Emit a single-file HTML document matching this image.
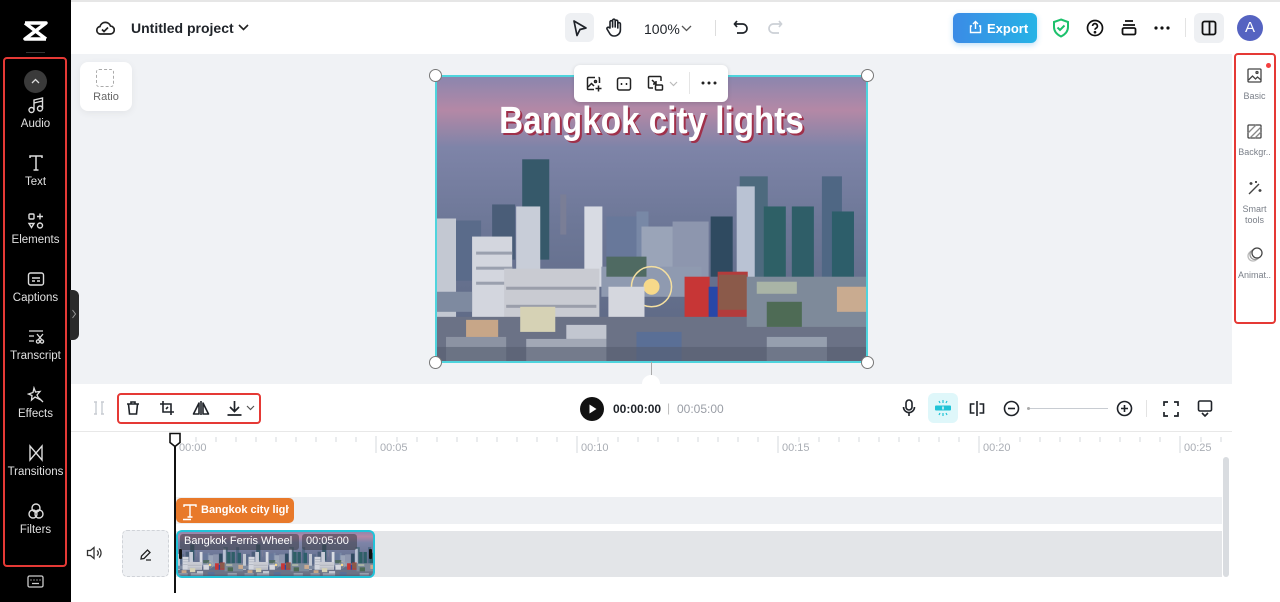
<!DOCTYPE html>
<html><head><meta charset="utf-8">
<style>
*{box-sizing:border-box;margin:0;padding:0}
body{width:1280px;height:602px;overflow:hidden;font-family:"Liberation Sans",sans-serif;background:#fff;position:relative}
.abs{position:absolute}
.side{left:0;top:0;width:71px;height:602px;background:#000}
.si{position:absolute;left:0;width:71px;text-align:center;color:#d8d8d8;font-size:11px}
.si svg{display:block;margin:0 auto 4px}
.lbl{font-size:11.5px;color:#e0e0e0}
.rp{position:absolute;left:1234px;width:41px;text-align:center;color:#7a7f88;font-size:9px;line-height:11px}
.rp svg{display:block;margin:0 auto 8px}
.ic{position:absolute}
</style></head><body>
<div class="abs" style="left:0;top:0;width:1280px;height:2px;background:#e6e6e6"></div>
<div class="abs" style="left:71px;top:54px;width:1161px;height:330px;background:#f0f2f5"></div>
<div class="abs side"></div>
<svg class="ic" style="left:23px;top:21px" width="25" height="20" viewBox="0 0 25 20"><path d="M2 2h21L2 18h21M2 2l21 16" fill="none" stroke="#fff" stroke-width="3.5" stroke-linejoin="round"/></svg>
<div class="abs" style="left:26px;top:52px;width:19px;height:1px;background:#333"></div>
<div class="abs" style="left:3px;top:57px;width:64px;height:510px;border:2.5px solid #e53935;border-radius:4px"></div>
<div class="abs" style="left:24px;top:70px;width:23px;height:23px;border-radius:50%;background:#3a3a3a"></div>
<svg class="ic" style="left:30px;top:77px" width="11" height="8"><path d="M2 6l3.5-3.5L9 6" stroke="#ddd" fill="none" stroke-width="1.3"/></svg>
<div class="si" style="top:96px"><svg width="18" height="18" viewBox="0 0 18 18" fill="none" stroke="#ddd" stroke-width="1.4"><circle cx="4.5" cy="14" r="2.5"/><circle cx="13" cy="12.5" r="2.5"/><path d="M7 14V4l8.5-2v10.5M7 7l8.5-2"/></svg><span class="lbl">Audio</span></div>
<div class="si" style="top:154px"><svg width="18" height="18" viewBox="0 0 18 18" fill="none" stroke="#ddd" stroke-width="1.5"><path d="M3 4V2h12v2M9 2v14M6.5 16h5"/></svg><span class="lbl">Text</span></div>
<div class="si" style="top:212px"><svg width="18" height="18" viewBox="0 0 18 18" fill="none" stroke="#ddd" stroke-width="1.4"><rect x="2" y="2" width="5" height="5" rx="1"/><path d="M13 1.5v6M10 4.5h6M2 11.5l2.5 4 2.5-4z"/><circle cx="13" cy="13.5" r="2.5"/></svg><span class="lbl">Elements</span></div>
<div class="si" style="top:270px"><svg width="18" height="18" viewBox="0 0 18 18" fill="none" stroke="#ddd" stroke-width="1.4"><rect x="1.5" y="3" width="15" height="12" rx="2"/><path d="M5 8h8M5 11h3M10 11h3"/></svg><span class="lbl">Captions</span></div>
<div class="si" style="top:328px"><svg width="18" height="18" viewBox="0 0 18 18" fill="none" stroke="#ddd" stroke-width="1.3"><path d="M2 3h14M2 8h5M2 13h5"/><circle cx="11" cy="13.5" r="1.6"/><circle cx="15" cy="13.5" r="1.6"/><path d="M10 6l5 6M16 6l-5 6"/></svg><span class="lbl">Transcript</span></div>
<div class="si" style="top:386px"><svg width="18" height="18" viewBox="0 0 18 18" fill="none" stroke="#ddd" stroke-width="1.3"><path d="M7 2l1.5 4 4.5-.5-3 3.5 2 4-4-2-3.5 3 .5-4.5L1.5 8l4.5-1.5z M12 12l4 4"/></svg><span class="lbl">Effects</span></div>
<div class="si" style="top:444px"><svg width="18" height="18" viewBox="0 0 18 18" fill="none" stroke="#ddd" stroke-width="1.4"><path d="M3 2v14l12-14v14z"/></svg><span class="lbl">Transitions</span></div>
<div class="si" style="top:502px"><svg width="18" height="18" viewBox="0 0 18 18" fill="none" stroke="#ddd" stroke-width="1.4"><circle cx="9" cy="6" r="4"/><circle cx="6" cy="12" r="4"/><circle cx="12" cy="12" r="4"/></svg><span class="lbl">Filters</span></div>
<svg class="ic" style="left:27px;top:575px" width="17" height="14" viewBox="0 0 17 14" fill="none" stroke="#ccc" stroke-width="1.3"><rect x="1" y="1" width="15" height="11" rx="1.5"/><path d="M4 4.5v1M7 4.5v1M10 4.5v1M13 4.5v1M5 8.5h7"/></svg>
<div class="abs" style="left:70px;top:290px;width:9px;height:50px;background:#2a2a2a;border-radius:0 6px 6px 0"></div>
<svg class="ic" style="left:71px;top:309px" width="6" height="10"><path d="M1.5 1l3 4-3 4" stroke="#999" fill="none"/></svg>

<svg class="ic" style="left:95px;top:19px" width="20" height="17" viewBox="0 0 20 17" fill="none" stroke="#222" stroke-width="1.7"><path d="M5 15h10a4 4 0 0 0 .5-8A5.5 5.5 0 0 0 5 7.5 3.8 3.8 0 0 0 5 15z"/><path d="M7 10.5l2 2 4-4"/></svg>
<div class="abs" style="left:131px;top:20px;font-size:14px;font-weight:bold;color:#1f2329">Untitled project</div>
<svg class="ic" style="left:238px;top:24px" width="11" height="7"><path d="M1 1l4.5 4.5L10 1" stroke="#222" fill="none" stroke-width="1.6"/></svg>
<div class="abs" style="left:565px;top:13px;width:29px;height:29px;border-radius:6px;background:#eef0f3"></div>
<svg class="ic" style="left:572px;top:19px" width="16" height="18" viewBox="0 0 16 18"><path d="M2 2l12 7-6 1.5-3 6z" fill="none" stroke="#1f2329" stroke-width="1.7" stroke-linejoin="round"/></svg>
<svg class="ic" style="left:605px;top:18px" width="17" height="19" viewBox="0 0 17 19" fill="none" stroke="#1f2329" stroke-width="1.6" stroke-linejoin="round"><path d="M5 10V4a1.3 1.3 0 0 1 2.6 0v5V2.5a1.3 1.3 0 0 1 2.6 0V9V3.5a1.3 1.3 0 0 1 2.6 0V10V6a1.3 1.3 0 0 1 2.6 0v6a6 6 0 0 1-6 6H9a5 5 0 0 1-4-2l-3-5a1.3 1.3 0 0 1 2.2-1.3z"/></svg>
<div class="abs" style="left:644px;top:21px;font-size:14px;color:#1f2329">100%</div>
<svg class="ic" style="left:681px;top:25px" width="11" height="7"><path d="M1 1l4.5 4.5L10 1" stroke="#555" fill="none" stroke-width="1.3"/></svg>
<div class="abs" style="left:715px;top:20px;width:1px;height:16px;background:#ddd"></div>
<svg class="ic" style="left:733px;top:19px" width="16" height="16" viewBox="0 0 16 16" fill="none" stroke="#1f2329" stroke-width="1.7"><path d="M4 2L1.5 5 4 8M2 5h7.5a4.5 4.5 0 0 1 0 9H4"/></svg>
<svg class="ic" style="left:767px;top:19px" width="16" height="16" viewBox="0 0 16 16" fill="none" stroke="#ccd0d6" stroke-width="1.7"><path d="M12 2l2.5 3L12 8M14 5H6.5a4.5 4.5 0 0 0 0 9H12"/></svg>
<div class="abs" style="left:953px;top:13px;width:84px;height:30px;border-radius:6px;background:linear-gradient(90deg,#3b8be6,#25b3e6);box-shadow:0 2px 6px rgba(40,150,230,.3)"></div>
<svg class="ic" style="left:969px;top:20px" width="13" height="14" viewBox="0 0 13 14" fill="none" stroke="#fff" stroke-width="1.4"><path d="M6.5 9V1.5M4 4l2.5-2.5L9 4M3 6H1.5v6.5h10V6H10"/></svg>
<div class="abs" style="left:987px;top:21px;font-size:13px;font-weight:bold;color:#fff">Export</div>
<svg class="ic" style="left:1052px;top:18px" width="18" height="20" viewBox="0 0 18 20" fill="none" stroke="#1cc16c" stroke-width="2"><path d="M9 1.5l7 2.5v5c0 4.5-3 7.5-7 9.5-4-2-7-5-7-9.5V4z"/><path d="M5.5 9.5l2.5 2.5 4.5-4.5"/></svg>
<svg class="ic" style="left:1086px;top:19px" width="18" height="18" viewBox="0 0 18 18" fill="none" stroke="#111" stroke-width="1.7"><circle cx="9" cy="9" r="7.5"/><path d="M6.6 7a2.4 2.4 0 1 1 3.4 2.2c-.7.4-1 .8-1 1.6"/><circle cx="9" cy="13.2" r=".5" fill="#111"/></svg>
<svg class="ic" style="left:1121px;top:19px" width="16" height="17" viewBox="0 0 16 17" fill="none" stroke="#111" stroke-width="1.8"><path d="M4 2h8M2 6h12"/><rect x="1.5" y="9" width="13" height="6.5" rx="1.5"/></svg>
<svg class="ic" style="left:1154px;top:26px" width="16" height="4"><circle cx="2" cy="2" r="1.6" fill="#111"/><circle cx="8" cy="2" r="1.6" fill="#111"/><circle cx="14" cy="2" r="1.6" fill="#111"/></svg>
<div class="abs" style="left:1185px;top:18px;width:1px;height:19px;background:#e3e3e3"></div>
<div class="abs" style="left:1194px;top:13px;width:30px;height:30px;border-radius:6px;background:#eef0f3"></div>
<svg class="ic" style="left:1201px;top:20px" width="16" height="16" viewBox="0 0 16 16" fill="none" stroke="#111" stroke-width="1.8"><rect x="1.5" y="1.5" width="13" height="13" rx="2"/><path d="M8.5 1.5v13"/></svg>
<div class="abs" style="left:1237px;top:15px;width:26px;height:26px;border-radius:50%;background:#5563c1;color:#fff;font-size:15px;text-align:center;line-height:26px">A</div>

<div class="abs" style="left:80px;top:62px;width:52px;height:49px;background:#fff;border-radius:8px;box-shadow:0 2px 8px rgba(0,0,0,.06)"></div>
<div class="abs" style="left:96px;top:69px;width:18px;height:18px;border:1.5px dashed #aaa;border-radius:3px"></div>
<div class="abs" style="left:80px;top:91px;width:52px;text-align:center;font-size:11px;color:#666">Ratio</div>

<svg class="abs" style="left:436px;top:76px" width="431" height="286" viewBox="0 0 430 285" preserveAspectRatio="none">
<defs>
<linearGradient id="sky" x1="0" y1="0" x2="0" y2="1"><stop offset="0" stop-color="#8a86ae"/><stop offset=".12" stop-color="#b488a6"/><stop offset=".25" stop-color="#7e84a8"/><stop offset=".5" stop-color="#6e7898"/><stop offset="1" stop-color="#5a6680"/></linearGradient>
<g id="city">
<rect width="430" height="285" fill="url(#sky)"/>
<rect x="86" y="83" width="27" height="100" fill="#36596a"/>
<rect x="56" y="128" width="23" height="55" fill="#4a5d78"/>
<rect x="80" y="130" width="24" height="70" fill="#c8cdd8"/>
<rect x="148" y="130" width="18" height="80" fill="#d8dbe3"/>
<rect x="0" y="142" width="20" height="100" fill="#c3c8d2"/>
<rect x="20" y="144" width="25" height="60" fill="#5a6b8a"/>
<rect x="124" y="118" width="6" height="40" fill="#7a7e96"/>
<rect x="170" y="140" width="30" height="60" fill="#68789a"/>
<rect x="200" y="135" width="12" height="60" fill="#7888a6"/>
<rect x="205" y="150" width="32" height="60" fill="#9aa4b8"/>
<rect x="274" y="140" width="22" height="60" fill="#2f4a60"/>
<rect x="303" y="100" width="28" height="130" fill="#4d6a7e"/>
<rect x="327" y="130" width="22" height="120" fill="#2e6066"/>
<rect x="355" y="130" width="22" height="100" fill="#2f5e68"/>
<rect x="385" y="100" width="20" height="120" fill="#4f6784"/>
<rect x="395" y="135" width="22" height="110" fill="#2d5e6a"/>
<rect x="300" y="110" width="18" height="100" fill="#b9c2d3"/>
<rect x="236" y="145" width="36" height="65" fill="#8d96ae"/>
<rect x="36" y="160" width="40" height="110" fill="#d3d6de"/>
<rect x="40" y="175" width="36" height="3" fill="#9aa0ae"/><rect x="40" y="190" width="36" height="3" fill="#9aa0ae"/><rect x="40" y="205" width="36" height="3" fill="#9aa0ae"/>
<rect x="68" y="192" width="95" height="80" fill="#c9cbd2"/>
<rect x="70" y="210" width="90" height="3" fill="#9a9eaa"/><rect x="70" y="228" width="90" height="3" fill="#9a9eaa"/>
<rect x="0" y="215" width="36" height="20" fill="#7e8aa0"/>
<rect x="165" y="190" width="100" height="30" fill="#8f9ab0"/>
<rect x="170" y="180" width="40" height="20" fill="#4f6a62"/>
<circle cx="215" cy="210" r="20" fill="none" stroke="#f4dfa0" stroke-width="1.5"/>
<circle cx="215" cy="210" r="8" fill="#f7d98a"/>
<rect x="172" y="210" width="36" height="40" fill="#d5d7de"/>
<rect x="248" y="200" width="25" height="70" fill="#c73636"/>
<rect x="272" y="210" width="10" height="65" fill="#2747a8"/>
<rect x="281" y="195" width="30" height="80" fill="#b33c3c"/>
<rect x="282" y="198" width="28" height="35" fill="#8b5a4a"/>
<rect x="0" y="240" width="430" height="45" fill="#6b7286"/>
<rect x="310" y="200" width="120" height="50" fill="#7e8a9a"/>
<rect x="320" y="205" width="40" height="12" fill="#a9b4a6"/>
<rect x="330" y="225" width="35" height="25" fill="#4e6b55"/>
<rect x="400" y="210" width="30" height="25" fill="#c9ab90"/>
<rect x="30" y="243" width="32" height="18" fill="#c7a688"/>
<rect x="84" y="230" width="35" height="25" fill="#d6d2b5"/>
<rect x="10" y="260" width="60" height="25" fill="#8c93a3"/>
<rect x="90" y="262" width="80" height="23" fill="#a2a8b6"/>
<rect x="130" y="248" width="40" height="14" fill="#c2c6d0"/>
<rect x="200" y="255" width="45" height="30" fill="#5a6f96"/>
<rect x="330" y="260" width="60" height="25" fill="#969fae"/>
<rect x="0" y="270" width="430" height="15" fill="#555d70" opacity=".6"/>
</g></defs>
<use href="#city"/>
<text x="215" y="57" text-anchor="middle" font-family="Liberation Sans Narrow, Liberation Sans" font-weight="bold" font-size="38" fill="#a0304a" transform="translate(2,2)" textLength="304" lengthAdjust="spacingAndGlyphs">Bangkok city lights</text>
<text x="215" y="57" text-anchor="middle" font-family="Liberation Sans Narrow, Liberation Sans" font-weight="bold" font-size="38" fill="#fff" textLength="304" lengthAdjust="spacingAndGlyphs">Bangkok city lights</text>
</svg>
<div class="abs" style="left:435px;top:75px;width:433px;height:288px;border:2px solid #4fd4dd"></div>
<div class="abs" style="left:429px;top:69px;width:13px;height:13px;border-radius:50%;background:#fff;border:1px solid #777"></div>
<div class="abs" style="left:861px;top:69px;width:13px;height:13px;border-radius:50%;background:#fff;border:1px solid #777"></div>
<div class="abs" style="left:429px;top:356px;width:13px;height:13px;border-radius:50%;background:#fff;border:1px solid #777"></div>
<div class="abs" style="left:861px;top:356px;width:13px;height:13px;border-radius:50%;background:#fff;border:1px solid #777"></div>
<div class="abs" style="left:651px;top:362px;width:1px;height:14px;background:#aaa"></div>
<div class="abs" style="left:642px;top:375px;width:18px;height:12px;border-radius:9px 9px 0 0;background:#fff"></div>
<div class="abs" style="left:574px;top:65px;width:154px;height:37px;background:#fff;border-radius:6px;box-shadow:0 1px 4px rgba(0,0,0,.15)"></div>
<svg class="ic" style="left:586px;top:76px" width="16" height="16" viewBox="0 0 16 16" fill="none" stroke="#222" stroke-width="1.5"><path d="M9 1.5H2.5a1 1 0 0 0-1 1v10a1 1 0 0 0 1 1H8M13.5 7V2.5a1 1 0 0 0-1-1"/><path d="M2 11l3.5-3.5L8 10"/><circle cx="9.5" cy="5.5" r="1"/><path d="M12.5 9.5v6M9.5 12.5h6"/></svg>
<svg class="ic" style="left:616px;top:76px" width="16" height="16" viewBox="0 0 16 16" fill="none" stroke="#222" stroke-width="1.5"><rect x="1.5" y="2" width="13" height="12" rx="2"/><path d="M5.5 7v2M10.5 7v2"/></svg>
<svg class="ic" style="left:647px;top:75px" width="17" height="17" viewBox="0 0 17 17" fill="none" stroke="#222" stroke-width="1.5"><path d="M14 6V2.5a1 1 0 0 0-1-1H2.5a1 1 0 0 0-1 1V12a1 1 0 0 0 1 1H6"/><path d="M5 5l4 4M9 6v3H6"/><rect x="8.5" y="10" width="7" height="5" rx="1"/></svg>
<svg class="ic" style="left:669px;top:81px" width="9" height="6"><path d="M1 1l3.5 3.5L8 1" stroke="#bbb" fill="none" stroke-width="1.2"/></svg>
<div class="abs" style="left:689px;top:72px;width:1px;height:22px;background:#e5e5e5"></div>
<svg class="ic" style="left:701px;top:81px" width="16" height="4"><circle cx="2" cy="2" r="1.5" fill="#222"/><circle cx="8" cy="2" r="1.5" fill="#222"/><circle cx="14" cy="2" r="1.5" fill="#222"/></svg>

<div class="abs" style="left:1232px;top:54px;width:48px;height:548px;background:#fff"></div>
<div class="abs" style="left:1234px;top:53px;width:42px;height:271px;border:2.5px solid #e53935;border-radius:4px"></div>
<div class="abs" style="left:1266px;top:63px;width:5px;height:5px;border-radius:50%;background:#f43f3f"></div>
<div class="rp" style="top:68px"><svg width="15" height="15" viewBox="0 0 15 15" fill="none" stroke="#444" stroke-width="1.3"><rect x="1" y="1" width="13" height="13" rx="1"/><path d="M1.5 12l4-4 3 3 2-2 3.5 3"/><circle cx="10" cy="4.5" r="1"/></svg>Basic</div>
<div class="rp" style="top:124px"><svg width="15" height="15" viewBox="0 0 15 15" fill="none" stroke="#444" stroke-width="1.3"><rect x="1" y="1" width="13" height="13" rx="1"/><path d="M1 9l8-8M3 14L14 3M8 14l6-6" stroke="#888"/></svg>Backgr..</div>
<div class="rp" style="top:180px"><svg width="16" height="16" viewBox="0 0 16 16" fill="none" stroke="#444" stroke-width="1.4"><path d="M2 14l10-10M4 2v3M2.5 3.5h3M13 9v3M11.5 10.5h3M9 1v2M8 2h2"/></svg>Smart<br>tools</div>
<div class="rp" style="top:247px"><svg width="16" height="15" viewBox="0 0 16 15" fill="none" stroke-width="1.3"><circle cx="6" cy="9" r="5" stroke="#bbb"/><circle cx="8" cy="7.5" r="5" stroke="#999" fill="#fff"/><circle cx="10" cy="6" r="5" stroke="#444" fill="#fff"/></svg>Animat..</div>

<div class="abs" style="left:71px;top:431px;width:1161px;height:1px;background:#e8e8e8"></div>
<svg class="ic" style="left:92px;top:401px" width="14" height="14" viewBox="0 0 14 14" fill="none" stroke="#c8ccd2" stroke-width="1.4"><path d="M2 1h2v12H2M12 1h-2v12h2M4 1h1M4 13h1M9 1h1M9 13h1"/></svg>
<div class="abs" style="left:117px;top:393px;width:144px;height:31px;border:2.5px solid #e53935;border-radius:4px"></div>
<svg class="ic" style="left:125px;top:400px" width="16" height="16" viewBox="0 0 16 16" fill="none" stroke="#1f2329" stroke-width="1.6"><path d="M2 4h12M6 4V2h4v2M3.5 4l1 10h7l1-10"/></svg>
<svg class="ic" style="left:159px;top:400px" width="16" height="16" viewBox="0 0 16 16" fill="none" stroke="#1f2329" stroke-width="1.6"><path d="M4 1v11h11M1 4h11v11M7 9l2-2"/></svg>
<svg class="ic" style="left:192px;top:400px" width="18" height="16" viewBox="0 0 18 16" fill="none" stroke="#1f2329" stroke-width="1.6" stroke-linejoin="round"><path d="M9 1v14M7 3L1.5 14H7zM11 3l5.5 11H11z"/></svg>
<svg class="ic" style="left:226px;top:400px" width="17" height="16" viewBox="0 0 17 16" fill="none" stroke="#1f2329" stroke-width="1.7"><path d="M8.5 1v10M4 7l4.5 4.5L13 7M1.5 15h14"/></svg>
<svg class="ic" style="left:246px;top:405px" width="9" height="6"><path d="M1 1l3.5 3.5L8 1" stroke="#555" fill="none" stroke-width="1.2"/></svg>

<div class="abs" style="left:580px;top:397px;width:24px;height:24px;border-radius:50%;background:#111"></div>
<svg class="ic" style="left:589px;top:404px" width="8" height="10"><path d="M0.5 0.5L7.5 5 0.5 9.5z" fill="#fff"/></svg>
<div class="abs" style="left:613px;top:402px;font-size:12px;font-weight:bold;color:#1f2329">00:00:00</div>
<div class="abs" style="left:667px;top:401px;font-size:12px;color:#bbb">|</div>
<div class="abs" style="left:677px;top:402px;font-size:12px;color:#9a9ea6">00:05:00</div>

<svg class="ic" style="left:902px;top:399px" width="14" height="18" viewBox="0 0 14 18" fill="none" stroke="#1f2329" stroke-width="1.6"><rect x="4" y="1" width="6" height="10" rx="3"/><path d="M1.5 8a5.5 5.5 0 0 0 11 0M7 13.5V17"/></svg>
<div class="abs" style="left:928px;top:393px;width:30px;height:30px;border-radius:6px;background:#dff7fa"></div>
<svg class="ic" style="left:934px;top:400px" width="18" height="16" viewBox="0 0 18 16"><rect x="1" y="5.5" width="16" height="5" rx="1" fill="#20c3d6"/><path d="M9 0v3M9 13v3M5 1l1 2M13 1l-1 2M5 15l1-2M13 15l-1-2" stroke="#20c3d6" stroke-width="1.2"/><path d="M9 6.5v3" stroke="#fff" stroke-width="1.3"/></svg>
<svg class="ic" style="left:968px;top:400px" width="18" height="17" viewBox="0 0 18 17" fill="none" stroke="#1f2329" stroke-width="1.6"><path d="M9 1v15M6.5 4H2.5v9h4M11.5 4h4v9h-4"/></svg>
<svg class="ic" style="left:1003px;top:400px" width="17" height="17" viewBox="0 0 17 17" fill="none" stroke="#1f2329" stroke-width="1.6"><circle cx="8.5" cy="8.5" r="7"/><path d="M5 8.5h7"/></svg>
<div class="abs" style="left:1028px;top:408px;width:80px;height:1px;background:#c8ccd2"></div>
<div class="abs" style="left:1027px;top:407px;width:3px;height:3px;border-radius:50%;background:#aaa"></div>
<svg class="ic" style="left:1116px;top:400px" width="17" height="17" viewBox="0 0 17 17" fill="none" stroke="#1f2329" stroke-width="1.6"><circle cx="8.5" cy="8.5" r="7"/><path d="M5 8.5h7M8.5 5v7"/></svg>
<div class="abs" style="left:1146px;top:400px;width:1px;height:17px;background:#e3e3e3"></div>
<svg class="ic" style="left:1163px;top:401px" width="16" height="16" viewBox="0 0 16 16" fill="none" stroke="#1f2329" stroke-width="1.7"><path d="M1 5V1h4M11 1h4v4M15 11v4h-4M5 15H1v-4"/></svg>
<svg class="ic" style="left:1197px;top:400px" width="16" height="18" viewBox="0 0 16 18" fill="none" stroke="#1f2329" stroke-width="1.6"><rect x="1.5" y="1" width="13" height="10" rx="1.5"/><path d="M5 13l3 3 3-3"/></svg>

<svg class="abs" style="left:71px;top:432px" width="1161" height="30">
<g stroke="#d6d9de" stroke-width="1">
<path d="M125 5v5M145 5v5M165 5v5M185 5v5M205 5v5M225 5v5M245 5v5M265 5v5M285 5v5M326 5v5M346 5v5M366 5v5M386 5v5M406 5v5M426 5v5M446 5v5M466 5v5M486 5v5M527 5v5M547 5v5M567 5v5M587 5v5M607 5v5M627 5v5M647 5v5M667 5v5M687 5v5M728 5v5M748 5v5M768 5v5M788 5v5M808 5v5M828 5v5M848 5v5M868 5v5M888 5v5M929 5v5M949 5v5M969 5v5M989 5v5M1009 5v5M1029 5v5M1049 5v5M1069 5v5M1089 5v5M1130 5v5M1150 5v5"/>
<path d="M305 4v17M506 4v17M707 4v17M908 4v17M1109 4v17"/>
</g>
<g font-family="Liberation Sans" font-size="11" fill="#a9adb4">
<text x="108" y="19">00:00</text><text x="309" y="19">00:05</text><text x="510" y="19">00:10</text><text x="711" y="19">00:15</text><text x="912" y="19">00:20</text><text x="1113" y="19">00:25</text>
</g></svg>

<div class="abs" style="left:176px;top:497px;width:1046px;height:27px;background:#eef0f3"></div>
<div class="abs" style="left:176px;top:498px;width:118px;height:25px;background:#e8792a;border-radius:5px"></div>
<svg class="ic" style="left:182px;top:503px" width="16" height="18" viewBox="0 0 16 18" fill="none" stroke="#fff" stroke-width="1.4"><path d="M2 4V2h12v2M8 2v12M5.5 14h5M1 16.5h8"/></svg>
<div class="abs" style="left:201px;top:504px;width:88px;overflow:hidden;white-space:nowrap;font-size:11px;font-weight:bold;color:#fff">Bangkok city lights</div>
<svg class="ic" style="left:86px;top:546px" width="16" height="14" viewBox="0 0 16 14" fill="none" stroke="#333" stroke-width="1.3"><path d="M1.5 4.5h3L8 1.5v11L4.5 9.5h-3z M11 4.5a3 3 0 0 1 0 5M13 2.5a6 6 0 0 1 0 9"/></svg>
<div class="abs" style="left:122px;top:530px;width:47px;height:47px;background:#eef0f3;border:1px dashed #d0d3d8;border-radius:5px"></div>
<svg class="ic" style="left:139px;top:548px" width="13" height="13" viewBox="0 0 13 13" fill="none" stroke="#222" stroke-width="1.3"><path d="M2 11l.5-3L8.5 2l2.5 2.5-6 6zM7 12h5"/></svg>
<div class="abs" style="left:176px;top:531px;width:1046px;height:46px;background:#e3e5e8"></div>
<svg class="abs" style="left:177px;top:531px;border-radius:6px" width="197" height="46" viewBox="0 0 197 46" preserveAspectRatio="none">
<svg x="0" y="0" width="66" height="46" viewBox="0 0 430 285" preserveAspectRatio="none"><use href="#city"/></svg>
<svg x="66" y="0" width="66" height="46" viewBox="0 0 430 285" preserveAspectRatio="none"><use href="#city"/></svg>
<svg x="132" y="0" width="66" height="46" viewBox="0 0 430 285" preserveAspectRatio="none"><use href="#city"/></svg>
</svg>
<div class="abs" style="left:176px;top:530px;width:199px;height:48px;border:2px solid #22c2d8;border-radius:6px"></div>
<div class="abs" style="left:179px;top:549px;width:3px;height:10px;background:#111;border-radius:1px"></div>
<div class="abs" style="left:369px;top:549px;width:3px;height:10px;background:#111;border-radius:1px"></div>
<div class="abs" style="left:180px;top:534px;width:119px;height:16px;background:rgba(60,60,70,.55);border-radius:3px"></div>
<div class="abs" style="left:184px;top:535px;font-size:11px;color:#fff">Bangkok Ferris Wheel</div>
<div class="abs" style="left:302px;top:534px;width:55px;height:16px;background:rgba(60,60,70,.55);border-radius:3px"></div>
<div class="abs" style="left:306px;top:535px;font-size:11px;color:#fff">00:05:00</div>
<div class="abs" style="left:1223px;top:457px;width:6px;height:120px;background:#d9dce0;border-radius:3px"></div>

<div class="abs" style="left:174px;top:440px;width:2px;height:153px;background:#111"></div>
<svg class="ic" style="left:168px;top:432px" width="14" height="16" viewBox="0 0 14 16"><path d="M2 1.5h10v9L7 14.5 2 10.5z" fill="#fff" stroke="#111" stroke-width="1.6"/></svg>
</body></html>
